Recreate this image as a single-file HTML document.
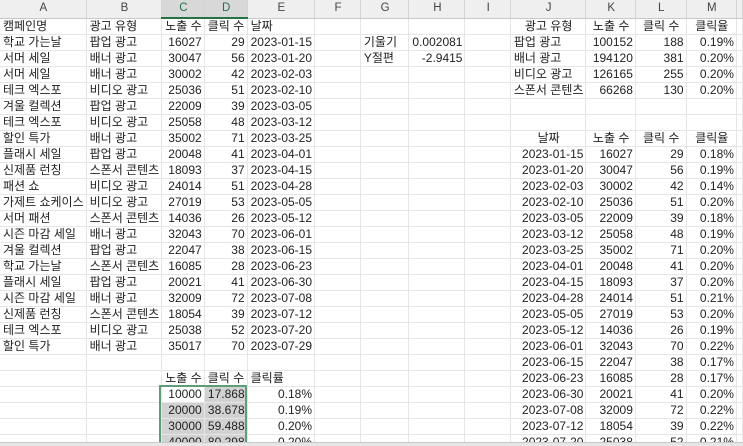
<!DOCTYPE html>
<html><head><meta charset="utf-8"><style>
html,body{margin:0;padding:0;width:743px;height:446px;overflow:hidden;background:#fff}
body{font-family:"Liberation Sans","Noto Sans CJK KR",sans-serif;font-size:12px;color:#222;position:relative}
table{border-collapse:collapse;table-layout:fixed;position:absolute;left:0;top:0}
td{height:15px;border-right:1px solid #e6e6e6;border-bottom:1px solid #e6e6e6;padding:0 2px 0 3px;white-space:nowrap;overflow:hidden;line-height:15px}
tr.h td{height:17px;background:#efefef;color:#444;text-align:center;border-right:1px solid #d4d4d4;border-bottom:1px solid #c8c8c8;font-size:11.5px}
tr.h td.s{background:#d8d8d8;color:#217346;border-bottom:2px solid #217346}
.r{text-align:right}.c{text-align:center}
.g{background:#d2d2d2}
#sel{position:absolute;left:159px;top:385px;width:88px;height:70px;border:2px solid #5f9c78;box-sizing:border-box}
#bar{position:absolute;left:0;top:442px;width:743px;height:4px;background:#e6e6e6;border-top:1px solid #c8c8c8}
</style></head><body>
<table>
<colgroup><col style="width:86px"><col style="width:74px"><col style="width:42px"><col style="width:43px"><col style="width:62px"><col style="width:51px"><col style="width:50px"><col style="width:51px"><col style="width:51px"><col style="width:73px"><col style="width:50px"><col style="width:52px"><col style="width:52px"><col style="width:6px"></colgroup>
<tr class="h"><td>A</td><td>B</td><td class="s">C</td><td class="s">D</td><td>E</td><td>F</td><td>G</td><td>H</td><td>I</td><td>J</td><td>K</td><td>L</td><td>M</td><td></td></tr>
<tr><td>캠페인명</td><td>광고 유형</td><td>노출 수</td><td>클릭 수</td><td>날짜</td><td></td><td></td><td></td><td></td><td class="c">광고 유형</td><td class="c">노출 수</td><td class="c">클릭 수</td><td class="c">클릭율</td><td></td></tr>
<tr><td>학교 가는날</td><td>팝업 광고</td><td class="r">16027</td><td class="r">29</td><td class="r">2023-01-15</td><td></td><td>기울기</td><td class="r">0.002081</td><td></td><td>팝업 광고</td><td class="r">100152</td><td class="r">188</td><td class="r">0.19%</td><td></td></tr>
<tr><td>서머 세일</td><td>배너 광고</td><td class="r">30047</td><td class="r">56</td><td class="r">2023-01-20</td><td></td><td>Y절편</td><td class="r">-2.9415</td><td></td><td>배너 광고</td><td class="r">194120</td><td class="r">381</td><td class="r">0.20%</td><td></td></tr>
<tr><td>서머 세일</td><td>배너 광고</td><td class="r">30002</td><td class="r">42</td><td class="r">2023-02-03</td><td></td><td></td><td></td><td></td><td>비디오 광고</td><td class="r">126165</td><td class="r">255</td><td class="r">0.20%</td><td></td></tr>
<tr><td>테크 엑스포</td><td>비디오 광고</td><td class="r">25036</td><td class="r">51</td><td class="r">2023-02-10</td><td></td><td></td><td></td><td></td><td>스폰서 콘텐츠</td><td class="r">66268</td><td class="r">130</td><td class="r">0.20%</td><td></td></tr>
<tr><td>겨울 컬렉션</td><td>팝업 광고</td><td class="r">22009</td><td class="r">39</td><td class="r">2023-03-05</td><td></td><td></td><td></td><td></td><td></td><td></td><td></td><td></td><td></td></tr>
<tr><td>테크 엑스포</td><td>비디오 광고</td><td class="r">25058</td><td class="r">48</td><td class="r">2023-03-12</td><td></td><td></td><td></td><td></td><td></td><td></td><td></td><td></td><td></td></tr>
<tr><td>할인 특가</td><td>배너 광고</td><td class="r">35002</td><td class="r">71</td><td class="r">2023-03-25</td><td></td><td></td><td></td><td></td><td class="c">날짜</td><td class="c">노출 수</td><td class="c">클릭 수</td><td class="c">클릭율</td><td></td></tr>
<tr><td>플래시 세일</td><td>팝업 광고</td><td class="r">20048</td><td class="r">41</td><td class="r">2023-04-01</td><td></td><td></td><td></td><td></td><td class="r">2023-01-15</td><td class="r">16027</td><td class="r">29</td><td class="r">0.18%</td><td></td></tr>
<tr><td>신제품 런칭</td><td>스폰서 콘텐츠</td><td class="r">18093</td><td class="r">37</td><td class="r">2023-04-15</td><td></td><td></td><td></td><td></td><td class="r">2023-01-20</td><td class="r">30047</td><td class="r">56</td><td class="r">0.19%</td><td></td></tr>
<tr><td>패션 쇼</td><td>비디오 광고</td><td class="r">24014</td><td class="r">51</td><td class="r">2023-04-28</td><td></td><td></td><td></td><td></td><td class="r">2023-02-03</td><td class="r">30002</td><td class="r">42</td><td class="r">0.14%</td><td></td></tr>
<tr><td>가제트 쇼케이스</td><td>비디오 광고</td><td class="r">27019</td><td class="r">53</td><td class="r">2023-05-05</td><td></td><td></td><td></td><td></td><td class="r">2023-02-10</td><td class="r">25036</td><td class="r">51</td><td class="r">0.20%</td><td></td></tr>
<tr><td>서머 패션</td><td>스폰서 콘텐츠</td><td class="r">14036</td><td class="r">26</td><td class="r">2023-05-12</td><td></td><td></td><td></td><td></td><td class="r">2023-03-05</td><td class="r">22009</td><td class="r">39</td><td class="r">0.18%</td><td></td></tr>
<tr><td>시즌 마감 세일</td><td>배너 광고</td><td class="r">32043</td><td class="r">70</td><td class="r">2023-06-01</td><td></td><td></td><td></td><td></td><td class="r">2023-03-12</td><td class="r">25058</td><td class="r">48</td><td class="r">0.19%</td><td></td></tr>
<tr><td>겨울 컬렉션</td><td>팝업 광고</td><td class="r">22047</td><td class="r">38</td><td class="r">2023-06-15</td><td></td><td></td><td></td><td></td><td class="r">2023-03-25</td><td class="r">35002</td><td class="r">71</td><td class="r">0.20%</td><td></td></tr>
<tr><td>학교 가는날</td><td>스폰서 콘텐츠</td><td class="r">16085</td><td class="r">28</td><td class="r">2023-06-23</td><td></td><td></td><td></td><td></td><td class="r">2023-04-01</td><td class="r">20048</td><td class="r">41</td><td class="r">0.20%</td><td></td></tr>
<tr><td>플래시 세일</td><td>팝업 광고</td><td class="r">20021</td><td class="r">41</td><td class="r">2023-06-30</td><td></td><td></td><td></td><td></td><td class="r">2023-04-15</td><td class="r">18093</td><td class="r">37</td><td class="r">0.20%</td><td></td></tr>
<tr><td>시즌 마감 세일</td><td>배너 광고</td><td class="r">32009</td><td class="r">72</td><td class="r">2023-07-08</td><td></td><td></td><td></td><td></td><td class="r">2023-04-28</td><td class="r">24014</td><td class="r">51</td><td class="r">0.21%</td><td></td></tr>
<tr><td>신제품 런칭</td><td>스폰서 콘텐츠</td><td class="r">18054</td><td class="r">39</td><td class="r">2023-07-12</td><td></td><td></td><td></td><td></td><td class="r">2023-05-05</td><td class="r">27019</td><td class="r">53</td><td class="r">0.20%</td><td></td></tr>
<tr><td>테크 엑스포</td><td>비디오 광고</td><td class="r">25038</td><td class="r">52</td><td class="r">2023-07-20</td><td></td><td></td><td></td><td></td><td class="r">2023-05-12</td><td class="r">14036</td><td class="r">26</td><td class="r">0.19%</td><td></td></tr>
<tr><td>할인 특가</td><td>배너 광고</td><td class="r">35017</td><td class="r">70</td><td class="r">2023-07-29</td><td></td><td></td><td></td><td></td><td class="r">2023-06-01</td><td class="r">32043</td><td class="r">70</td><td class="r">0.22%</td><td></td></tr>
<tr><td></td><td></td><td></td><td></td><td></td><td></td><td></td><td></td><td></td><td class="r">2023-06-15</td><td class="r">22047</td><td class="r">38</td><td class="r">0.17%</td><td></td></tr>
<tr><td></td><td></td><td>노출 수</td><td>클릭 수</td><td>클릭률</td><td></td><td></td><td></td><td></td><td class="r">2023-06-23</td><td class="r">16085</td><td class="r">28</td><td class="r">0.17%</td><td></td></tr>
<tr><td></td><td></td><td class="r">10000</td><td class="r g">17.868</td><td class="r">0.18%</td><td></td><td></td><td></td><td></td><td class="r">2023-06-30</td><td class="r">20021</td><td class="r">41</td><td class="r">0.20%</td><td></td></tr>
<tr><td></td><td></td><td class="r g">20000</td><td class="r g">38.678</td><td class="r">0.19%</td><td></td><td></td><td></td><td></td><td class="r">2023-07-08</td><td class="r">32009</td><td class="r">72</td><td class="r">0.22%</td><td></td></tr>
<tr><td></td><td></td><td class="r g">30000</td><td class="r g">59.488</td><td class="r">0.20%</td><td></td><td></td><td></td><td></td><td class="r">2023-07-12</td><td class="r">18054</td><td class="r">39</td><td class="r">0.22%</td><td></td></tr>
<tr><td></td><td></td><td class="r g">40000</td><td class="r g">80.298</td><td class="r">0.20%</td><td></td><td></td><td></td><td></td><td class="r">2023-07-20</td><td class="r">25038</td><td class="r">52</td><td class="r">0.21%</td><td></td></tr>
</table>
<div id="sel"></div>
<div id="bar"></div>
</body></html>
